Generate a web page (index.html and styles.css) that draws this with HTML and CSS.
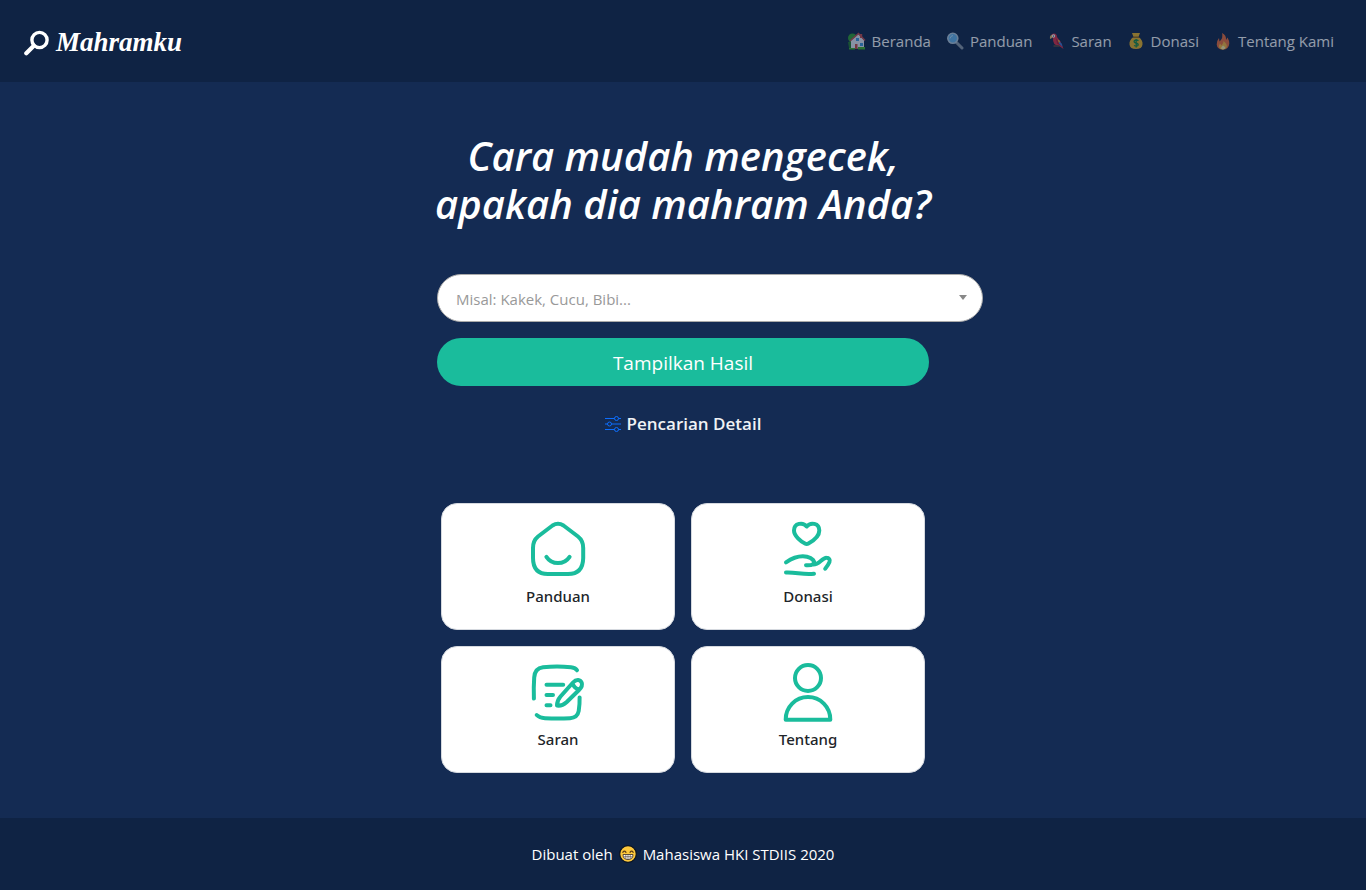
FILE: index.html
```html
<!DOCTYPE html>
<html lang="id">
<head>
<meta charset="utf-8">
<meta name="viewport" content="width=device-width, initial-scale=1">
<title>Mahramku</title>
<link rel="stylesheet" href="styles.css">
</head>
<body>
<header class="navbar">
  <a class="brand" href="#">
    <svg class="brand-icon" viewBox="0 0 26 26" aria-hidden="true"><circle cx="15.500" cy="10" r="7.600" fill="none" stroke="#fff" stroke-width="3.400"/><path d="M9.800 15.700 2.300 23.200" stroke="#fff" stroke-width="4.200" stroke-linecap="round"/></svg>
    <span>Mahramku</span>
  </a>
  <nav class="menu" aria-label="Menu utama">
    <a class="menu-link" href="#"><svg class="emoji" viewBox="0 0 18 18" aria-hidden="true"><circle cx="4.500" cy="6" r="4.500" fill="#2f9e2d"/><path d="M0 10h5v6H1z" fill="#227a28"/><path d="M3 8.500 10.500 2 16 8v8.500H3z" fill="#e9eef5"/><path d="m2 9 8.500-7.500L17 8.500" fill="none" stroke="#c54a4a" stroke-width="1.500"/><path d="M12 2h2.200v4H12z" fill="#c54a4a"/><path d="M7 12h2.500v5H7z" fill="#c94a42"/><path d="M8 6h3v3H8zm4 5h3v3h-3z" fill="#3d9ae0"/><path d="M1 16h6v1.500H1zm9-1h7v2.500h-7z" fill="#43b02a"/></svg>Beranda</a>
    <a class="menu-link" href="#"><svg class="emoji" viewBox="0 0 18 18" aria-hidden="true"><path d="m10.500 10.500 5.500 5.500" stroke="#8b98a5" stroke-width="3" stroke-linecap="round"/><circle cx="6.800" cy="6.300" r="5" fill="#66b5ee" stroke="#b6cbdc" stroke-width="1.600"/><path d="M4 6.500Q4.500 3.800 7 3.500" stroke="#b9e1fb" fill="none"/></svg>Panduan</a>
    <a class="menu-link" href="#"><svg class="emoji" viewBox="0 0 18 18" aria-hidden="true"><path d="M4 4.500Q4 1.500 7 1.500 10 1.700 10 5L13.500 9.500 16.500 17 11.500 13.500Q5.500 13 6 6.500z" fill="#db2c40"/><path d="m9 6.500 4.500 4 1.500 4-5-3z" fill="#ad1834"/><path d="m12 9 3 3 .5 3-3.500-3.500z" fill="#3979d5"/><path d="m10.500 7.500 2.500 1.500-1 2z" fill="#eebd31"/><circle cx="6.500" cy="4" r="1.700" fill="#fff"/><circle cx="6.500" cy="4" r=".6" fill="#111"/><path d="M5 3Q2.500 3 3 7l2-1z" fill="#e4bf63"/><path d="M6.500 14h6" stroke="#684a38" stroke-width="1.400"/></svg>Saran</a>
    <a class="menu-link" href="#"><svg class="emoji" viewBox="0 0 18 18" aria-hidden="true"><path d="M5 1h8l-1.500 4q4.500 3 4 7.500-.5 4.500-6.500 4.500t-6.500-4.500q-.5-4.500 4-7.500z" fill="#edb522"/><path d="M6 5.200h6" stroke="#805b18" stroke-width="1.300"/><path d="M11.500 8.700Q9 7.300 7.300 8.800q-.8 1.500 1.700 2.200 2.800.8 2 2.400-1.400 1.500-4 .1M9.200 7v8.500" stroke="#168a41" stroke-width="1.300" fill="none"/></svg>Donasi</a>
    <a class="menu-link" href="#"><svg class="emoji" viewBox="0 0 18 18" aria-hidden="true"><path d="M8 1Q12.500 3 12 8L13.500 5.500q2 3.500 1.800 6-.5 6-6.300 6t-6.300-5Q2.500 9 5 6l.5 3.500Q9.500 6 8 1" fill="#ef6d37"/><path d="M9.500 9q4.500 3.500 3 6.500-1.200 2-4 2T5 15q-.5-1.500 1-3.500l1.500 2q2.200-2 2-4.500" fill="#fdb938"/><path d="M9 13.500q3 1.500 2 3-2 2-4 0 0-1.500 2-3" fill="#fff0a0"/></svg>Tentang Kami</a>
  </nav>
</header>

<main class="content">
  <h1 class="title">Cara mudah mengecek,<br>apakah dia mahram Anda?</h1>
  <form class="search">
    <div class="picker">
      <select class="picker-select" aria-label="Pilih kerabat">
        <option>Misal: Kakek, Cucu, Bibi...</option>
      </select>
    </div>
    <button class="submit" type="button">Tampilkan Hasil</button>
  </form>
  <a class="detail" href="#">
    <svg class="detail-icon" viewBox="0 0 16 16" fill="none" stroke="#0d6efd" aria-hidden="true"><path d="M0 2.500h9.500m4 0H16M0 8h2.500m4 0H16M0 13.500h9.500m4 0H16"/><circle cx="11.500" cy="2.500" r="2"/><circle cx="4.500" cy="8" r="2"/><circle cx="11.500" cy="13.500" r="2"/></svg>
    <span>Pencarian Detail</span>
  </a>
  <section class="cards" aria-label="Pintasan">
    <a class="card" href="#">
      <svg class="card-icon" viewBox="0 0 64 64" aria-hidden="true"><path d="M26.500 8.500Q32 4.900 37.500 8.500L52 19.500Q57.200 23.500 57.200 31V41Q57 57 42 57H22Q7 57 7 41V31Q7 23.500 12 19.500Z"/><path d="M20.400 39.800C26 48.200 38 48.200 43.600 39.800"/></svg>
      <span>Panduan</span>
    </a>
    <a class="card" href="#">
      <svg class="card-icon" viewBox="0 0 64 64" aria-hidden="true"><path d="M30.700 9.500C27 4.800 18 6 18 13.500 18 19 25 24.500 29 26.500Q30.700 27.500 32.400 26.500C37 24 43.300 19 43.300 13.500 43.300 6 34.500 4.800 30.700 9.500Z"/><path d="M10 45.300C17 40.500 25 38.500 31 39.700 36 40.700 40 44.500 36.800 47.300Q35 48.500 30 48.200M36.500 47.500C43 48.500 46 40.500 50.500 40.700 53 40.700 54.500 43 53.500 45Q52 48.500 49.200 51.700M10 55.500C20 55 27 58 38 56.700"/></svg>
      <span>Donasi</span>
    </a>
    <a class="card" href="#">
      <svg class="card-icon" viewBox="0 0 64 64" aria-hidden="true"><path d="M7.900 38.600Q7.500 27 8.200 17.500 8.800 8.200 17 7.200 31 6 45 7.200 49.500 7.600 51 10.300M10.700 55Q13.500 58 19 58.200 32 59 44 58.200 51.500 57.700 52.700 51 53.800 44 53.600 37.400M20.500 24.700H37.200M20.500 35H27M20.500 45.300H24.500"/><path d="M31 45.500Q31 40.500 34.500 36.500L47 22.500C50.500 18.500 54.500 19.500 55.700 22.700 56.500 25 55.500 27.700 53 30L40.500 42.200Q36 46.300 31 45.500ZM46.500 23.500Q48.500 28.500 53 29.500"/></svg>
      <span>Saran</span>
    </a>
    <a class="card" href="#">
      <svg class="card-icon" viewBox="0 0 64 64" aria-hidden="true"><circle cx="32" cy="18" r="13"/><path d="M9.700 59.700V59.500C9.700 47 19.500 37 32 37S54.300 47 54.300 59.500V59.700Z"/></svg>
      <span>Tentang</span>
    </a>
  </section>
</main>

<footer class="footer">
  <span>Dibuat oleh</span>
  <svg class="emoji" viewBox="0 0 18 18" aria-hidden="true"><circle cx="9" cy="9" r="8.300" fill="#fdc83c" stroke="#0b1220" stroke-width="1.200"/><path d="M3.800 7.300q1.600-2.400 3.200 0M11 7.300q1.600-2.400 3.200 0" fill="none" stroke="#5c3c17" stroke-width="1.200" stroke-linecap="round"/><path d="M4 9.500h10q0 5-5 5t-5-5" fill="#fff" stroke="#4b3a2c" stroke-width=".9"/><path d="M4.500 11.700h9M6.800 9.800V14M9 9.800v4.500M11.200 9.800V14" stroke="#4b3a2c" stroke-width=".6"/></svg>
  <span>Mahasiswa HKI STDIIS 2020</span>
</footer>
</body>
</html>
```
FILE: styles.css
```css
* {
  box-sizing: border-box;
}

body {
  display: flex;
  flex-direction: column;
  min-height: 100vh;
  margin: 0;
  background: #142b53;
  color: #fff;
  font-family: "Segoe UI", "Open Sans", "Noto Sans", sans-serif;
  font-size: 15px;
  line-height: 24px;
}

a {
  color: inherit;
  text-decoration: none;
}

.navbar {
  display: flex;
  align-items: center;
  justify-content: space-between;
  min-height: 82px;
  padding: 0 32px 0 24px;
  background: #0f2344;
}

.brand {
  display: flex;
  align-items: center;
  gap: 6px;
  padding-top: 4px;
  font-family: "Liberation Serif", serif;
  font-size: 27px;
  font-weight: 700;
  font-style: italic;
}

.brand span {
  padding-bottom: 2px;
}

.brand-icon {
  width: 26px;
  height: 26px;
}

.menu {
  display: flex;
  gap: 15px;
}

.menu-link {
  display: flex;
  align-items: center;
  gap: 6px;
  opacity: 0.55;
}

.emoji {
  width: 18px;
  height: 18px;
}

.content {
  flex: 1;
  display: flex;
  flex-direction: column;
  align-items: center;
  width: 100%;
  max-width: 492px;
  margin: 0 auto;
  padding: 50px 0 44px;
}

.title {
  margin: 0;
  font-size: 40px;
  font-weight: 600;
  font-style: italic;
  line-height: 48px;
  text-align: center;
  white-space: nowrap;
}

.search {
  width: 100%;
  margin-top: 46px;
}

.picker {
  position: relative;
  width: 111%;
}

.picker::after {
  content: "";
  position: absolute;
  top: 21px;
  right: 16px;
  border: 4px solid transparent;
  border-top: 5px solid #888;
  border-bottom: 0;
  pointer-events: none;
}

.picker-select {
  display: block;
  width: 100%;
  height: 48px;
  padding: 2px 18px 0;
  border: 1px solid #aaa;
  border-radius: 24px;
  background: #fff;
  color: #999;
  font: inherit;
  appearance: none;
}

.submit {
  width: 100%;
  height: 48px;
  margin-top: 16px;
  padding: 2px 0 0;
  border: 0;
  border-radius: 24px;
  background: #1abc9c;
  color: #fff;
  font: inherit;
  font-size: 19px;
}

.detail {
  display: flex;
  align-items: center;
  gap: 6px;
  margin-top: 26px;
  color: #f0f2f5;
  font-size: 17px;
  font-weight: 600;
}

.detail-icon {
  width: 16px;
  height: 16px;
}

.cards {
  display: grid;
  grid-template-columns: 1fr 1fr;
  gap: 16px;
  width: 100%;
  margin-top: 67px;
  padding: 0 4px;
}

.card {
  display: flex;
  flex-direction: column;
  align-items: center;
  gap: 3px;
  padding: 13px 0 21px;
  border: 1px solid #d5d9df;
  border-radius: 16px;
  background: #fff;
  color: #212529;
  font-family: "Segoe UI", "Noto Sans", sans-serif;
  font-weight: 500;
}

.card-icon {
  width: 64px;
  height: 64px;
  fill: none;
  stroke: #1abc9c;
  stroke-width: 4;
  stroke-linecap: round;
  stroke-linejoin: round;
}

.footer {
  display: flex;
  align-items: center;
  justify-content: center;
  gap: 6px;
  min-height: 72px;
  background: #0f2344;
}
```
